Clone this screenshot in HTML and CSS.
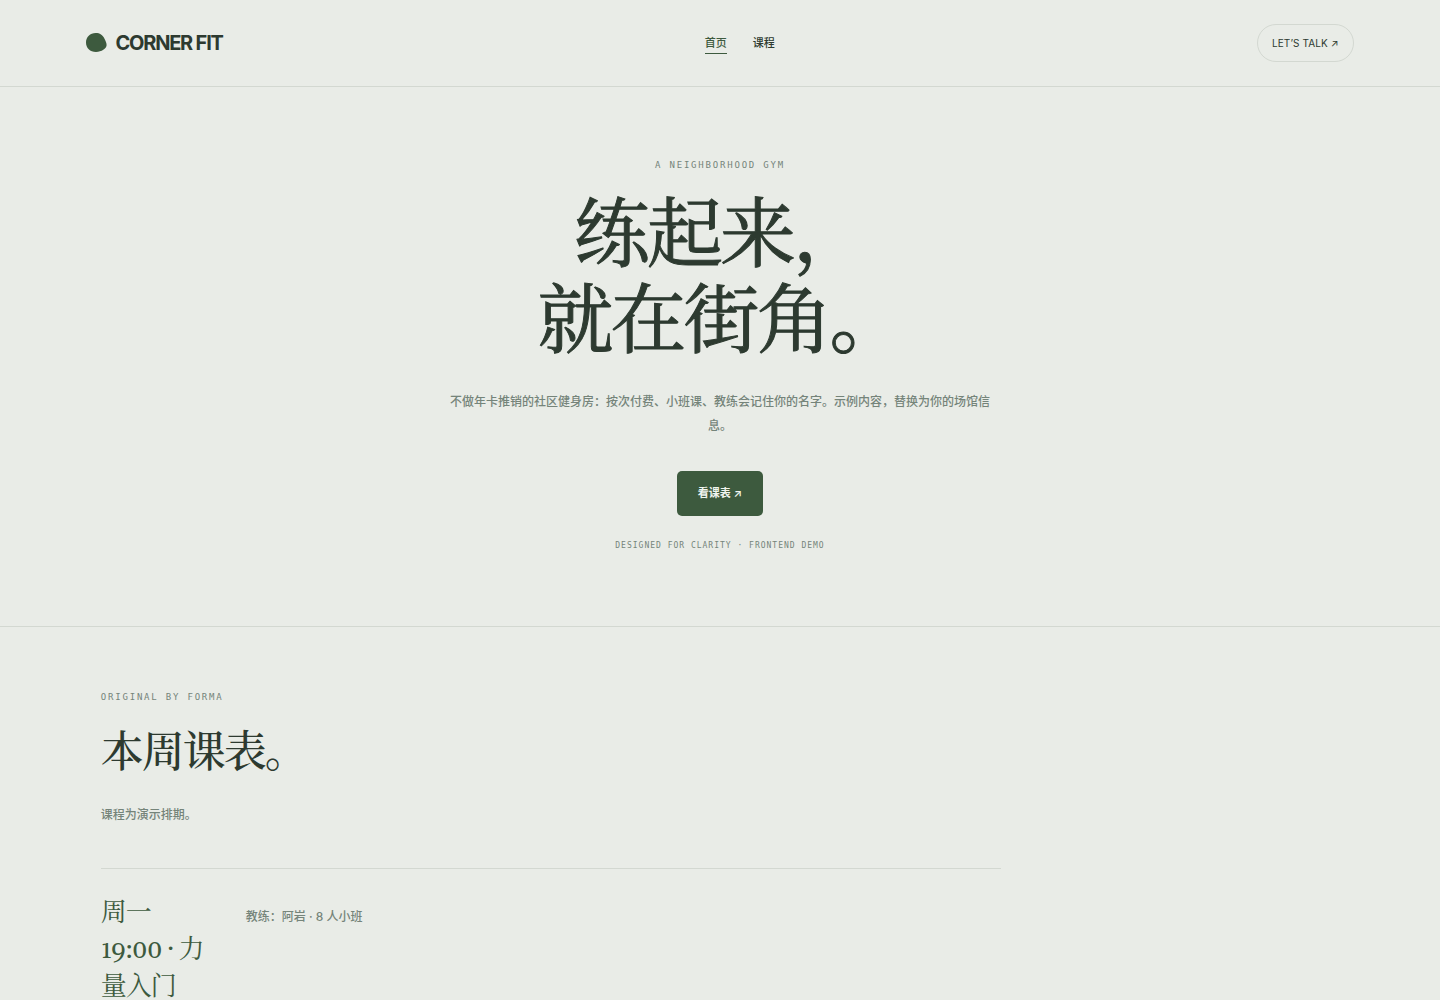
FILE: index.html
```html
<!DOCTYPE html>
<html lang="zh-CN">
<head>
    <meta charset="UTF-8">
    <meta name="viewport" content="width=device-width, initial-scale=1.0">
    <title>Corner Fit</title>
    <link rel="stylesheet" href="styles.css">
</head>
<body>
    <header class="header">
        <a class="brand" href="#">
            <svg class="brandMark" viewBox="0 0 21 20" aria-hidden="true">
                <path d="M9.6 0C14 0 16.6 1.8 18.5 5.7C19.7 8.2 20.7 10.1 20.6 12.3C20.4 15.7 15.6 18.9 10 18.9C4 18.9 0 14.9 0 9.4C0 4 4.2 0 9.6 0Z" fill="#3d5a3e"/>
            </svg>
            <span>CORNER FIT</span>
        </a>
        <nav class="nav">
            <a class="navLink active" href="#">首页</a>
            <a class="navLink" href="#classes">课程</a>
        </nav>
        <a class="talk" href="#talk">LET’S TALK ↗</a>
    </header>
    <main>
        <section class="hero">
            <p class="eyebrow">A NEIGHBORHOOD GYM</p>
            <h1 class="heroTitle">练起来，<br>就在街角。</h1>
            <p class="heroText">不做年卡推销的社区健身房：按次付费、小班课、教练会记住你的名字。示例内容，替换为你的场馆信息。</p>
            <a class="cta" href="#classes">看课表 ↗</a>
            <p class="note">DESIGNED FOR CLARITY · FRONTEND DEMO</p>
        </section>
        <section class="classes" id="classes">
            <p class="eyebrow">ORIGINAL BY FORMA</p>
            <h2 class="classesTitle">本周课表。</h2>
            <p class="classesText">课程为演示排期。</p>
            <div class="classRow">
                <h3 class="className">周一 19:00 · 力量入门</h3>
                <p class="classInfo">教练：阿岩 · 8 人小班</p>
            </div>
        </section>
    </main>
</body>
</html>
```
FILE: styles.css
```css
*{
    box-sizing: border-box;
}
body{
    margin: 0;
    background-color: #e9ece7;
    color: #2d3a30;
    font-family: Inter, "Noto Sans CJK SC", sans-serif;
    font-size: 12px;
    line-height: 24px;
}
h1,h2,h3,p{
    margin: 0;
}
a{
    color: inherit;
    text-decoration: none;
}
.header{
    display: flex;
    align-items: center;
    justify-content: space-between;
    padding: 24px 6%;
    border-bottom: 1px solid #d3d8d1;
}
.brand{
    display: flex;
    align-items: center;
    gap: 8px;
    font-size: 20px;
    font-weight: 700;
    letter-spacing: -0.06em;
}
.brandMark{
    width: 21px;
    height: 20px;
}
.nav{
    display: flex;
    gap: 26px;
    font-size: 11px;
    font-weight: 500;
    line-height: 20px;
}
.navLink{
    border-bottom: 1px solid transparent;
}
.active{
    color: #3d5a3e;
    border-bottom-color: #3d5a3e;
}
.talk{
    padding: 8px 14px;
    border: 1px solid #d3d8d1;
    border-radius: 20px;
    font-size: 10px;
    line-height: 20px;
    letter-spacing: 0.01em;
}
.hero{
    display: flex;
    flex-direction: column;
    align-items: center;
    padding: 72px 24px 74px;
    border-bottom: 1px solid #d3d8d1;
    text-align: center;
}
.eyebrow{
    color: #75847a;
    font-family: "DejaVu Sans Mono", monospace;
    font-size: 9px;
    line-height: 12px;
    letter-spacing: 0.2em;
}
.heroTitle,
.classesTitle,
.className{
    font-family: Gelasio, Georgia, "Noto Serif CJK SC", serif;
    font-weight: 400;
}
.heroTitle{
    margin-top: 25px;
    font-size: 76px;
    line-height: 86px;
    letter-spacing: -3px;
    -webkit-text-stroke: 1px #2d3a30;
}
.heroText{
    max-width: 540px;
    margin-top: 22px;
    color: #75847a;
    font-weight: 500;
}
.cta{
    margin-top: 33px;
    padding: 12px 21px;
    border-radius: 5px;
    background-color: #3d5a3e;
    color: #f0f4ee;
    font-size: 11px;
    font-weight: 600;
    line-height: 21px;
}
.note{
    margin-top: 24px;
    color: #75847a;
    font-family: "DejaVu Sans Mono", monospace;
    font-size: 8px;
    line-height: 12px;
    letter-spacing: 1px;
}
.classes{
    padding: 64px 7%;
}
.classesTitle{
    margin-top: 24px;
    font-size: 43px;
    font-weight: 500;
    line-height: 56px;
    letter-spacing: -2px;
}
.classesText{
    margin-top: 20px;
    color: #75847a;
    font-weight: 500;
}
.classRow{
    display: grid;
    grid-template-columns: 110px 1fr;
    gap: 35px;
    max-width: 900px;
    margin-top: 41px;
    padding: 26px 0;
    border-top: 1px solid #d3d8d1;
}
.className{
    color: #3d5a3e;
    font-size: 26px;
    line-height: 37px;
    letter-spacing: -1px;
}
.classInfo{
    padding-top: 10px;
    color: #75847a;
    font-weight: 500;
}
```
